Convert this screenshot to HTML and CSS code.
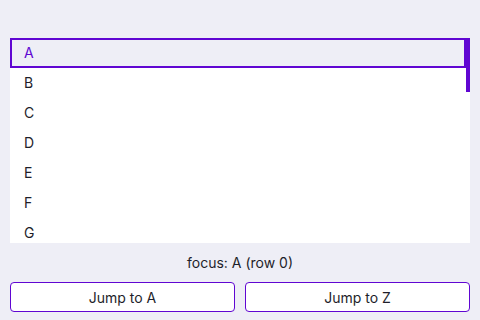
FILE: index.html
```html
<html lang="en">
<head>
  <meta charset="UTF-8">
  <title>List focus</title>
  <link rel="stylesheet" href="styles.css">
</head>
<body>
  <main class="wrap">
    <div class="list" id="list" tabindex="0">
      <ul class="rows">
        <li class="row focused">A</li>
        <li class="row">B</li>
        <li class="row">C</li>
        <li class="row">D</li>
        <li class="row">E</li>
        <li class="row">F</li>
        <li class="row">G</li>
      </ul>
      <div class="track"><div class="thumb"></div></div>
    </div>
    <div class="status">focus: A (row 0)</div>
    <div class="actions">
      <button class="btn">Jump to A</button>
      <button class="btn">Jump to Z</button>
    </div>
  </main>
</body>
</html>
```

FILE: styles.css
```css
:root {
  --bg: #EEEEF6;
  --card: #FFFFFF;
  --primary: #6006D2;
  --text: #1E1E2A;
}
* { box-sizing: border-box; margin: 0; padding: 0; }
body {
  font-family: Inter, 'Noto Sans', sans-serif;
  font-size: 14px;
  background: var(--bg);
  color: var(--text);
  width: 480px;
  height: 320px;
  overflow: hidden;
}
.wrap {
  padding: 38px 10px 0;
  display: flex;
  flex-direction: column;
}
.list {
  display: flex;
  height: 205px;
  background: var(--card);
  overflow: hidden;
}
.rows {
  list-style: none;
  flex: 1;
}
.row {
  height: 30px;
  line-height: 30px;
  padding-left: 14px;
}
.row.focused {
  background: var(--bg);
  border: 2px solid var(--primary);
  line-height: 26px;
  padding-left: 12px;
  color: var(--primary);
}
.track { width: 4px; }
.thumb {
  height: 54px;
  background: var(--primary);
}
.status {
  text-align: center;
  line-height: 20px;
  margin-top: 10px;
}
.actions {
  display: flex;
  gap: 10px;
  margin-top: 9px;
}
.btn {
  flex: 1;
  height: 30px;
  background: var(--card);
  border: 1px solid var(--primary);
  border-radius: 4px;
  font: inherit;
  color: var(--text);
  cursor: pointer;
}
```
